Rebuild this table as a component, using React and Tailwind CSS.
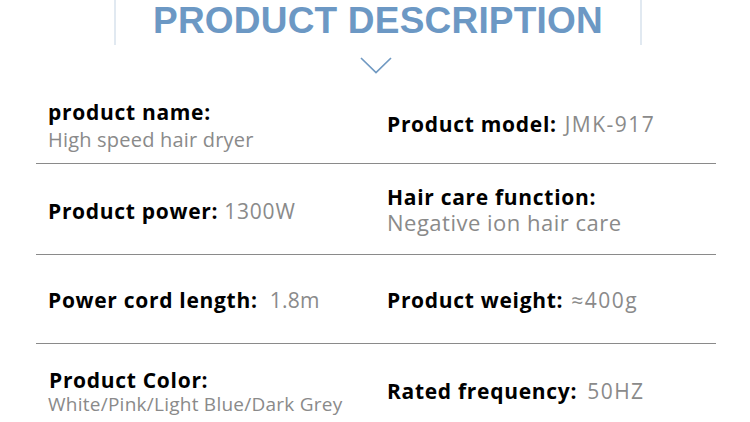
import React from 'react';

const label = 'text-[21px] font-bold text-black tracking-[0.7px]';
const value = 'font-normal text-[#8a8a8a]';

let Spec = ({ name, val, gap = 'ml-2', size = 'text-[21px] tracking-[1.5px]' }) => (
  <div className="flex items-baseline leading-[28px] whitespace-nowrap">
    <span className={label}>{name}</span>
    <span className={`${value} ${size} ${gap}`}>{val}</span>
  </div>
);

let App = () => {
  return (
    <div
      className="w-[750px] h-[422px] bg-white overflow-hidden"
      style={{ fontFamily: '"Open Sans", "Noto Sans", sans-serif' }}
    >
      {/* heading */}
      <div className="h-[90px] flex flex-col">
        <div className="pl-[114px]">
          <div className="w-[528px] h-[45px] border-l-2 border-r-2 border-[#e1e9f1] flex justify-center pt-[2px]">
            <h1
              className="text-[37px] leading-[37px] font-bold text-[#6c98c4] tracking-[0.2px]"
              style={{ fontFamily: '"Liberation Sans", Arial, sans-serif' }}
            >
              PRODUCT DESCRIPTION
            </h1>
          </div>
        </div>
        <div className="flex justify-center mt-[12px] pl-[1px]">
          <svg width="32" height="17" viewBox="0 0 32 17" fill="none">
            <polyline
              points="1,1 16,15.5 31,1"
              stroke="#7099c2"
              strokeWidth="1.7"
            />
          </svg>
        </div>
      </div>

      {/* spec table */}
      <div className="mx-[36px] w-[680px] flex flex-col">
        <div className="h-[74px] grid grid-cols-[351px_1fr] border-b border-[#8a8a8a]">
          <div className="pl-3 pt-[8px] leading-[28px]">
            <div className={label}>product name:</div>
            <div className={`${value} text-[20px] tracking-[0.2px]`}>High speed hair dryer</div>
          </div>
          <div className="pt-[20px]">
            <Spec name="Product model:" val="JMK-917" />
          </div>
        </div>

        <div className="h-[91px] grid grid-cols-[351px_1fr] border-b border-[#8a8a8a]">
          <div className="pl-3 pt-[33px]">
            <Spec name="Product power:" val="1300W" gap="ml-[6px]" size="text-[21px] tracking-[0.8px]" />
          </div>
          <div className="pt-[21px] leading-[25px]">
            <div className={label}>Hair care function:</div>
            <div className={`${value} text-[22px] leading-[24px] tracking-[0.5px]`}>Negative ion hair care</div>
          </div>
        </div>

        <div className="h-[89px] grid grid-cols-[351px_1fr] border-b border-[#8a8a8a]">
          <div className="pl-3 pt-[31px]">
            <Spec name="Power cord length:" val="1.8m" gap="ml-3" size="text-[21px] tracking-[0.3px]" />
          </div>
          <div className="pt-[31px]">
            <Spec name="Product weight:" val="≈400g" />
          </div>
        </div>

        <div className="h-[78px] grid grid-cols-[351px_1fr]">
          <div className="pl-3 pt-[24px] leading-[24px]">
            <div className={`${label} pl-[1px]`}>Product Color:</div>
            <div className={`${value} text-[19px] tracking-[0.25px]`}>White/Pink/Light Blue/Dark Grey</div>
          </div>
          <div className="pt-[33px]">
            <Spec name="Rated frequency:" val="50HZ" gap="ml-[10px]" />
          </div>
        </div>
      </div>
    </div>
  );
};

export default App;
